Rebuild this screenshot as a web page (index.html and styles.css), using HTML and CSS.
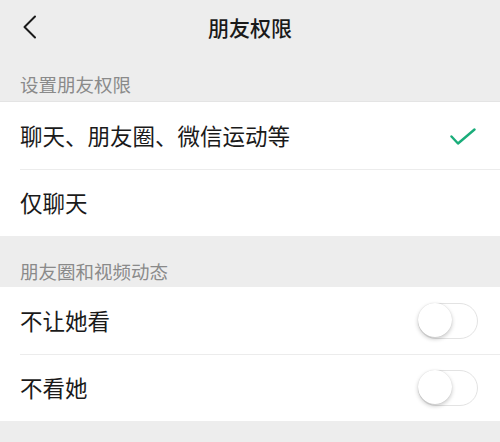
FILE: index.html
```html
<!DOCTYPE html>
<html lang="zh-CN">
<head>
  <meta charset="UTF-8" />
  <meta name="viewport" content="width=device-width, initial-scale=1.0"/>
  <title>朋友权限</title>
  <link rel="stylesheet" href="styles.css">
</head>
<body>
  <div class="page">
    <div class="nav">
      <svg class="back" width="14" height="24" viewBox="0 0 14 24">
        <path d="M12 1.5 L1.5 12 L12 22.5" fill="none" stroke="#1a1a1a" stroke-width="2" stroke-linecap="round" stroke-linejoin="round"/>
      </svg>
      <div class="nav-title">朋友权限</div>
    </div>

    <div class="section-title first">设置朋友权限</div>
    <div class="group top-line">
      <div class="row">
        <span class="label">聊天、朋友圈、微信运动等</span>
        <svg class="check" width="26" height="18" viewBox="0 0 26 18">
          <path d="M1.5 8.5 L8 15.5 L24.5 1.5" fill="none" stroke="#1aad7a" stroke-width="2.4" stroke-linecap="round" stroke-linejoin="round"/>
        </svg>
      </div>
      <div class="row">
        <span class="label">仅聊天</span>
      </div>
    </div>

    <div class="section-title">朋友圈和视频动态</div>
    <div class="group">
      <div class="row">
        <span class="label">不让她看</span>
        <div class="switch"><div class="knob"></div></div>
      </div>
      <div class="row">
        <span class="label">不看她</span>
        <div class="switch"><div class="knob"></div></div>
      </div>
    </div>
  </div>
</body>
</html>
```

FILE: styles.css
```css
* {
  box-sizing: border-box;
}

body {
  margin: 0;
  padding: 0;
  background: #ededed;
  font-family: "Noto Sans CJK SC", "Noto Sans", sans-serif;
  color: #1a1a1a;
}

.page {
  width: 500px;
  height: 442px;
  overflow: hidden;
  background: #ededed;
}

.nav {
  position: relative;
  height: 54px;
  display: flex;
  align-items: center;
  justify-content: center;
}

.back {
  position: absolute;
  left: 23px;
  top: 15px;
}

.nav-title {
  font-size: 21px;
  font-weight: 500;
  line-height: 1;
  margin-top: 0;
}

.section-title {
  height: 51px;
  padding: 0 20px 7px;
  display: flex;
  align-items: flex-end;
  font-size: 18.5px;
  line-height: 1;
  color: #8a8a8a;
}

.section-title.first {
  height: 47px;
  padding-bottom: 8px;
}

.group {
  background: #fff;
}

.top-line {
  border-top: 1px solid #e4e4e4;
}

.row {
  position: relative;
  height: 67px;
  padding: 0 22px 0 20px;
  display: flex;
  align-items: center;
  justify-content: space-between;
}

.row + .row::before {
  content: '';
  position: absolute;
  top: 0;
  left: 20px;
  right: 0;
  height: 1px;
  background: #ececec;
}

.label {
  font-size: 22.5px;
  line-height: 1;
  color: #1a1a1a;
}

.check {
  margin-right: 2px;
  margin-top: 2px;
}

.switch {
  position: relative;
  width: 60px;
  height: 36px;
  border: 1.5px solid #e3e3e3;
  border-radius: 18px;
  background: #fff;
}

.knob {
  position: absolute;
  left: -1px;
  top: -1px;
  width: 34px;
  height: 34px;
  border-radius: 50%;
  background: #fff;
  box-shadow: 0 2px 4px rgba(0, 0, 0, 0.22), 0 0 1px rgba(0, 0, 0, 0.15);
}
```
